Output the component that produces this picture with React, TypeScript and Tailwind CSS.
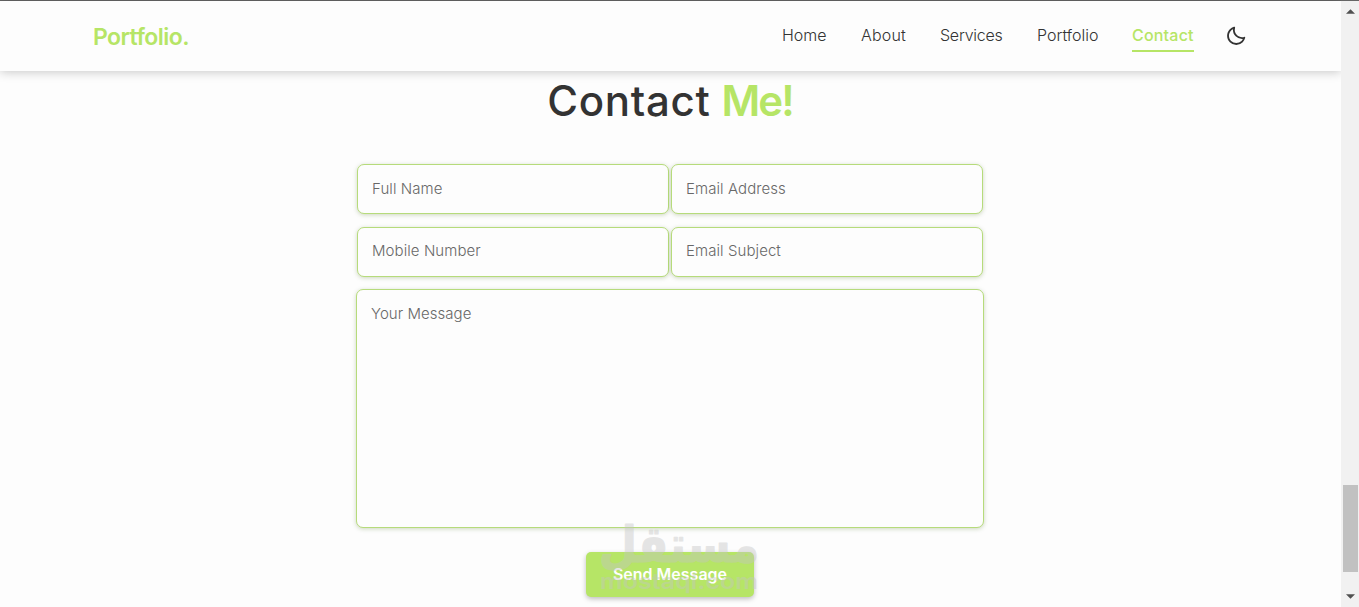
import React, { useState } from "react";
import { BiMoon } from "react-icons/bi";

const navLinks = [
  { label: "Home", href: "#home", style: "w-[46px]" },
  { label: "About", href: "#about", style: "w-[46px] tracking-[0.2px]" },
  { label: "Services", href: "#services", style: "w-[64px] tracking-[-0.25px]" },
  { label: "Portfolio", href: "#portfolio", style: "w-[62px]" },
  { label: "Contact", href: "#contact", style: "w-[62px] tracking-[0.2px]" },
];

const fields = [
  { name: "name", label: "Full Name", style: "pb-[2px]" },
  { name: "email", label: "Email Address", style: "pb-[2px]" },
  { name: "mobile", label: "Mobile Number", style: "pb-[4px]" },
  { name: "subject", label: "Email Subject", style: "pb-[4px]" },
];

const Header: React.FC<{ active: string }> = ({ active }) => (
  <header className="relative z-10 flex h-[70px] shrink-0 items-center justify-between bg-[#fdfdfd] pr-[94px] pl-[93px] shadow-[0_1px_10px_rgba(0,0,0,0.22)]">
    <a href="#home" className="pt-[2px] text-[23px] font-semibold tracking-[-0.55px] text-[#b6e566]">
      Portfolio.
    </a>

    <div className="flex items-center gap-[32px]">
      <nav className="flex gap-[33px] text-base">
        {navLinks.map((link) => (
          <a
            key={link.href}
            href={link.href}
            className={`h-[32px] border-b-2 pt-[3px] leading-[24px] whitespace-nowrap ${link.style} ${
              link.label === active
                ? "border-[#b6e566] font-medium text-[#b6e566]"
                : "border-transparent font-light text-[#333333]"
            }`}
          >
            {link.label}
          </a>
        ))}
      </nav>
      <button aria-label="Toggle theme" className="-mr-px -ml-px pr-px">
        <BiMoon className="size-[22px] text-[#333333]" />
      </button>
    </div>
  </header>
);

const ContactForm: React.FC = () => {
  const [message, setMessage] = useState("");

  return (
    <form className="flex w-[628px] flex-col items-center" onSubmit={(e) => e.preventDefault()}>
      <div className="grid w-[626px] grid-cols-2 gap-x-[2px] gap-y-[13px]">
        {fields.map((field) => (
          <input
            key={field.name}
            name={field.name}
            placeholder={field.label}
            className={`h-[50px] rounded-[7px] border border-[#b6db7b] bg-[#fdfdfd] px-[14px] text-[15px] font-light tracking-[0.08px] shadow-[0_1px_4px_rgba(60,100,0,0.25)] outline-none placeholder:text-[#686868] ${field.style}`}
          />
        ))}
      </div>
      <textarea
        value={message}
        onChange={(e) => setMessage(e.target.value)}
        placeholder="Your Message"
        className="mt-[12px] h-[239px] w-full resize-none rounded-[7px] border border-[#b6db7b] bg-[#fdfdfd] px-[14px] py-[13px] text-[15px] leading-[21px] font-light tracking-[0.05px] shadow-[0_1px_4px_rgba(60,100,0,0.25)] outline-none placeholder:text-[#686868]"
      />
      <button className="mt-[24px] h-[45px] w-[168px] rounded-[5px] bg-[#b6e566] pb-[2px] text-base font-semibold text-white shadow-[0_2px_5px_rgba(0,0,0,0.25)]">
        Send Message
      </button>
    </form>
  );
};

const Watermark: React.FC = () => (
  <div className="pointer-events-none absolute top-[510px] left-[589px] z-20 h-[90px] w-[180px]">
    <svg viewBox="0 0 180 90" className="size-full overflow-visible" fill="#c4c4c4" opacity="0.42">
      <text
        x="90"
        y="52"
        direction="rtl"
        textAnchor="middle"
        fontFamily="DejaVu Sans, sans-serif"
        fontWeight="700"
        fontSize="50"
        stroke="#c4c4c4"
        strokeWidth="1.2"
        strokeLinejoin="round"
        textLength="160"
        lengthAdjust="spacingAndGlyphs"
      >
        مستقل
      </text>
      <text
        x="11"
        y="79"
        fontFamily="Inter, sans-serif"
        fontWeight="600"
        fontSize="22"
        textLength="158"
        lengthAdjust="spacingAndGlyphs"
      >
        mostaql.com
      </text>
    </svg>
  </div>
);

const Scrollbar: React.FC = () => (
  <div className="relative z-10 flex w-[18px] shrink-0 flex-col items-center border-t border-[#666666] bg-[#f1f1f1]">
    <svg viewBox="0 0 10 5" className="mt-[8px] h-[5px] w-[9px] fill-[#505050]">
      <path d="M5 0L10 5H0Z" />
    </svg>
    <div className="mt-[471px] ml-[1px] h-[87px] w-[15px] bg-[#c1c1c1]" />
    <svg viewBox="0 0 10 5" className="mt-[22px] h-[5px] w-[9px] fill-[#505050]">
      <path d="M0 0H10L5 5Z" />
    </svg>
  </div>
);

export default function App() {
  return (
    <div className="relative flex h-[607px] w-[1359px] overflow-hidden bg-[#fdfdfd] font-['Inter',sans-serif]">
      <div className="flex min-w-0 flex-1 flex-col border-t border-[#666666]">
        <Header active="Contact" />
        <main className="flex flex-col items-center pr-[1px]">
          <h2 className="mt-[5px] mb-[38px] text-[42px] leading-[50px] font-medium tracking-[0.7px] text-[#333333]">
            Contact <span className="-ml-px font-semibold tracking-[-1.9px] text-[#b6e566]">Me!</span>
          </h2>
          <ContactForm />
        </main>
      </div>
      <Scrollbar />
      <Watermark />
    </div>
  );
}
